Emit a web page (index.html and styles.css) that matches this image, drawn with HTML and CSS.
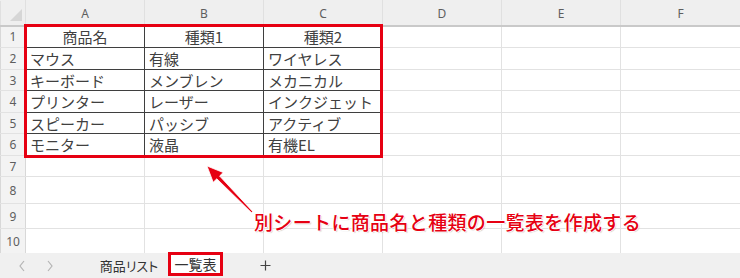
FILE: index.html
```html
<!DOCTYPE html>
<html lang="ja">

<head>
    <meta charset="UTF-8">
    <title>一覧表</title>
    <link rel="stylesheet" href="styles.css">
</head>

<body>
    <div class="book">
        <div class="sheet-area">
            <table class="sheet">
                <colgroup>
                    <col class="c-num">
                    <col class="c-cell">
                    <col class="c-cell">
                    <col class="c-cell">
                    <col class="c-cell">
                    <col class="c-cell">
                    <col>
                </colgroup>
                <tr class="head r0">
                    <th class="corner">
                        <svg width="14" height="14" viewBox="0 0 14 14"><polygon points="13,1 13,13 1,13" fill="#d6d6d6"/></svg>
                    </th>
                    <th>A</th><th>B</th><th>C</th><th>D</th><th>E</th><th>F</th>
                </tr>
                <tr class="r1">
                    <th>1</th>
                    <td class="d center">商品名</td><td class="d center">種類1</td><td class="d center">種類2</td>
                    <td></td><td></td><td></td>
                </tr>
                <tr class="r2">
                    <th>2</th>
                    <td class="d">マウス</td><td class="d">有線</td><td class="d">ワイヤレス</td>
                    <td></td><td></td><td></td>
                </tr>
                <tr class="r3">
                    <th>3</th>
                    <td class="d">キーボード</td><td class="d">メンブレン</td><td class="d">メカニカル</td>
                    <td></td><td></td><td></td>
                </tr>
                <tr class="r4">
                    <th>4</th>
                    <td class="d">プリンター</td><td class="d">レーザー</td><td class="d">インクジェット</td>
                    <td></td><td></td><td></td>
                </tr>
                <tr class="r5">
                    <th>5</th>
                    <td class="d">スピーカー</td><td class="d">パッシブ</td><td class="d">アクティブ</td>
                    <td></td><td></td><td></td>
                </tr>
                <tr class="r6">
                    <th>6</th>
                    <td class="d">モニター</td><td class="d">液晶</td><td class="d">有機EL</td>
                    <td></td><td></td><td></td>
                </tr>
                <tr class="r7">
                    <th>7</th><td></td><td></td><td></td><td></td><td></td><td></td>
                </tr>
                <tr class="r8">
                    <th>8</th><td></td><td></td><td></td><td></td><td></td><td></td>
                </tr>
                <tr class="r9">
                    <th>9</th><td></td><td></td><td></td><td></td><td></td><td></td>
                </tr>
                <tr class="r10">
                    <th>10</th><td></td><td></td><td></td><td></td><td></td><td></td>
                </tr>
            </table>

            <!-- annotation overlay -->
            <div class="mark-box"></div>
            <svg class="mark-arrow" width="60" height="60" viewBox="0 0 60 60">
                <polygon points="7,6 23.2,12.5 19.6,16 52.6,51.4 51.4,52.6 16.8,18.8 13.2,22.3"
                    fill="#e60012" stroke="#ffffff" stroke-width="0.8" stroke-linejoin="round"/>
            </svg>
            <div class="mark-text">別シートに商品名と種類の一覧表を作成する</div>
        </div>

        <div class="tabs">
            <div class="nav">
                <svg width="8" height="12" viewBox="0 0 8 12"><polyline points="6,1 2,6 6,11" fill="none" stroke="#b4b4b4" stroke-width="1.2"/></svg>
                <svg width="8" height="12" viewBox="0 0 8 12"><polyline points="2,1 6,6 2,11" fill="none" stroke="#b4b4b4" stroke-width="1.2"/></svg>
            </div>
            <div class="tab">商品リスト</div>
            <div class="tab active">一覧表</div>
            <div class="add">
                <svg width="11" height="11" viewBox="0 0 11 11"><path d="M5.5 0.5v10M0.5 5.5h10" stroke="#444" stroke-width="1.2"/></svg>
            </div>
        </div>
    </div>
</body>

</html>
```

FILE: styles.css
```css
body {
    margin: 0;
    width: 740px;
    height: 278px;
    overflow: hidden;
    background: #ffffff;
    font-family: "Noto Sans CJK JP", "Noto Sans", sans-serif;
}

.book {
    width: 740px;
    height: 278px;
}

.sheet-area {
    position: relative;
    height: 253px;
    overflow: hidden;
}

.sheet {
    border-collapse: collapse;
    table-layout: fixed;
    width: 741px;
}

.c-num {
    width: 25px;
}

.c-cell {
    width: 119px;
}

.sheet th,
.sheet td {
    border: 1px solid #e2e2e2;
    padding: 0;
    overflow: hidden;
    white-space: nowrap;
}

.sheet th {
    background: #f3f3f3;
    color: #5e5e5e;
    font-family: "Noto Sans", "Liberation Sans", sans-serif;
    font-weight: normal;
    font-size: 12px;
    text-align: center;
    border-color: #e2e2e2 #d8d8d8;
}

.sheet .head th {
    background: #efefef;
    border-color: #efefef #e0e0e0 #c9c9c9;
    border-bottom-width: 2px;
    vertical-align: bottom;
    padding-bottom: 3px;
}

.sheet .head .corner {
    padding: 0;
    vertical-align: middle;
}

.corner svg {
    display: block;
    margin: 4px 0 0 8px;
}

.sheet td {
    color: #404040;
    font-size: 15px;
    padding: 0 4px;
    line-height: 1;
}

.sheet td.d {
    border-color: #3f3f3f;
}

.sheet td.center {
    text-align: center;
}

.r0 { height: 25px; }
.r1 { height: 22px; }
.r2 { height: 22px; }
.r3 { height: 21px; }
.r4 { height: 22px; }
.r5 { height: 21px; }
.r6 { height: 22px; }
.r7 { height: 21px; }
.r8 { height: 27px; }
.r9 { height: 25px; }
.r10 { height: 25px; }

.mark-box {
    position: absolute;
    left: 24px;
    top: 24px;
    width: 353px;
    height: 128px;
    border: 3px solid #e60012;
}

.mark-arrow {
    position: absolute;
    left: 200px;
    top: 160px;
}

.mark-text {
    position: absolute;
    left: 254px;
    top: 208px;
    color: #e60012;
    font-size: 19px;
    font-weight: 500;
    letter-spacing: 0.35px;
    white-space: nowrap;
    text-shadow: 1px 0 0 #fff, -1px 0 0 #fff, 0 1px 0 #fff, 0 -1px 0 #fff,
        1px 1px 1px rgba(0, 0, 0, 0.25);
}

.tabs {
    height: 25px;
    background: #f0f0f0;
    display: flex;
    align-items: center;
    font-size: 13px;
    color: #333333;
}

.nav {
    display: flex;
    gap: 20px;
    padding-left: 18px;
    width: 72px;
}

.nav svg {
    display: block;
}

.tab {
    width: 78px;
    text-align: center;
    font-feature-settings: "palt";
}

.tab.active {
    width: 49px;
    height: 18px;
    line-height: 18px;
    margin-top: -3px;
    background: #ffffff;
    border: 3px solid #e60012;
    font-size: 14px;
}

.add {
    margin-left: 37px;
    display: flex;
}

.add svg {
    display: block;
}
```
